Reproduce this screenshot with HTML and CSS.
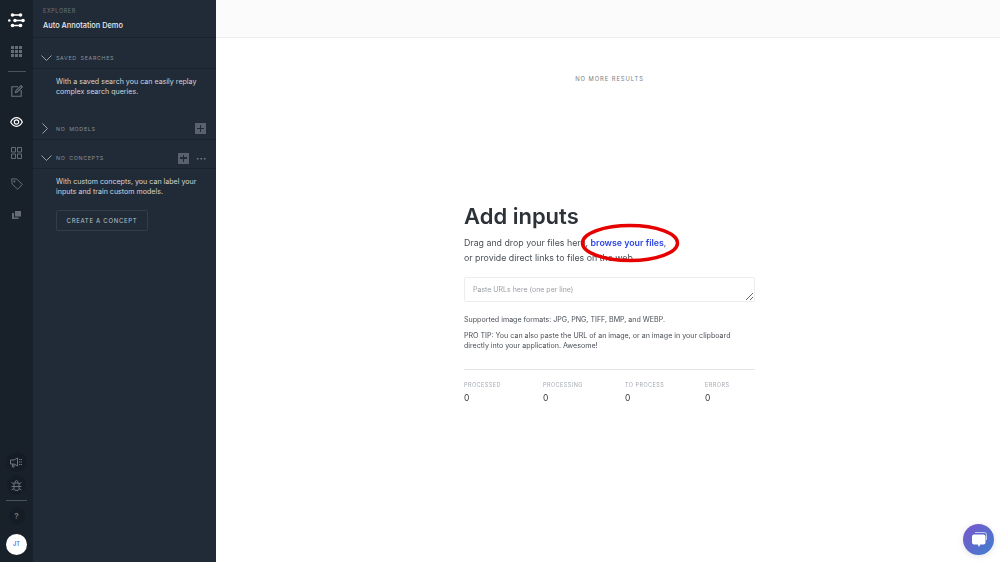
FILE: index.html
```html
<!DOCTYPE html>
<html lang="en">
<head>
    <meta charset="UTF-8">
    <meta name="viewport" content="width=device-width, initial-scale=1.0">
    <title>Explorer</title>
    <link rel="stylesheet" href="styles.css">
</head>
<body>

    <nav class="rail">
        <div class="rail-logo">
            <svg width="18" height="15" viewBox="0 0 18 15"><g fill="none" stroke="#fff" stroke-width="1.600"><path d="M4.500 2h8M7 7.500h8M4.500 12.500h8"/></g><g fill="#fff"><circle cx="4.500" cy="2" r="1.800"/><circle cx="12.500" cy="2" r="1.800"/><circle cx="1.300" cy="7.500" r="1.300"/><circle cx="7" cy="7.500" r="1.800"/><circle cx="15" cy="7.500" r="1.800"/><circle cx="4.500" cy="12.500" r="1.800"/><circle cx="12.500" cy="12.500" r="1.800"/></g></svg>
        </div>
        <div class="rail-item rail-apps">
            <svg width="11" height="11" viewBox="0 0 11 11" fill="#656c75"><path d="M0 0h3v3H0zM4 0h3v3H4zM8 0h3v3H8zM0 4h3v3H0zM4 4h3v3H4zM8 4h3v3H8zM0 8h3v3H0zM4 8h3v3H4zM8 8h3v3H8z"/></svg>
        </div>
        <div class="rail-line"></div>
        <div class="rail-item rail-edit">
            <svg width="12" height="12" viewBox="0 0 12 12" fill="none" stroke="#6b727b" stroke-width="1.100"><path d="M7 1.800H.8v9.400h9.400V5M4.500 7.500l.4-1.800L10 .6l1.300 1.300-5 5.100z"/></svg>
        </div>
        <div class="rail-item rail-eye">
            <svg width="13" height="10" viewBox="0 0 13 10" fill="none" stroke="#fff" stroke-width="1.200"><path d="M.7 5C2.200 2 4.200.7 6.500.7S10.800 2 12.300 5c-1.500 3-3.500 4.300-5.800 4.300S2.200 8 .7 5z"/><circle cx="6.500" cy="5" r="2.200"/></svg>
        </div>
        <div class="rail-item rail-grid">
            <svg width="11" height="12" viewBox="0 0 11 12" fill="none" stroke="#656c75"><path d="M.5.500h4v4.500h-4zM6.500.500h4v4.500h-4zM.5 7h4v4.500h-4zM6.500 7h4v4.500h-4z"/></svg>
        </div>
        <div class="rail-item rail-tag">
            <svg width="12" height="12" viewBox="0 0 12 12" fill="none" stroke="#656c75"><path d="M.7.800l5 .3 5.600 5.300-4.600 4.900L1.100 6z"/><circle cx="3.400" cy="3.500" r=".7"/></svg>
        </div>
        <div class="rail-item rail-copy">
            <svg width="9" height="8" viewBox="0 0 9 8" fill="#656c75"><path d="M3 0h6v5.500H3z"/><path d="M0 2h2v4.500h4.500V8H0z"/></svg>
        </div>
        <div class="rail-bottom">
            <div class="rail-item rail-round">
                <svg width="13" height="11" viewBox="0 0 13 11" fill="none" stroke="#6b727b"><path d="M.5 3h3.500l3.500-2v8L4 7H.5zM2.500 7v3h1.500V7"/><path d="M9 2.500h3M9 5h3M9 7.500h3" stroke-dasharray="1.500 .5"/></svg>
            </div>
            <div class="rail-item rail-round rail-bug">
                <svg width="11" height="12" viewBox="0 0 11 12" fill="none" stroke="#6b727b"><path d="M3 4h5v5.500a2 2 0 0 1-2 2H5a2 2 0 0 1-2-2zM4 4a1.500 2.500 0 0 1 3 0M3 7.500h5M3 5L.5 3.500M8 5l2.500-1.500M3 7.500H.5M8 7.500h2.500M3 9.500L.5 11M8 9.500l2.500 1.500"/></svg>
            </div>
            <div class="rail-line rail-line-low"></div>
            <div class="rail-help">?</div>
            <div class="avatar">JT</div>
        </div>
    </nav>

    <aside class="sidebar">
        <header class="sidebar-head">
            <div class="sidebar-kicker">EXPLORER</div>
            <div class="sidebar-title">Auto Annotation Demo</div>
        </header>

        <div class="section-head section-saved">
            <svg class="chev" width="11" height="6" viewBox="0 0 11 6"><path d="M.5.500l5 5 5-5" /></svg>
            <span class="section-label">SAVED SEARCHES</span>
        </div>
        <p class="section-text">With a saved search you can easily replay complex search queries.</p>

        <div class="section-head section-models">
            <svg class="chev" width="6" height="11" viewBox="0 0 6 11"><path d="M.5.500l5 5-5 5" /></svg>
            <span class="section-label">NO MODELS</span>
            <span class="add-box"></span>
        </div>

        <div class="section-head section-concepts">
            <svg class="chev" width="11" height="6" viewBox="0 0 11 6"><path d="M.5.500l5 5 5-5" /></svg>
            <span class="section-label">NO CONCEPTS</span>
            <span class="add-box"></span>
            <span class="dots">···</span>
        </div>
        <p class="section-text">With custom concepts, you can label your inputs and train custom models.</p>
        <button class="concept-button">CREATE A CONCEPT</button>
    </aside>

    <main class="main">
        <div class="topbar"></div>
        <div class="no-more">NO MORE RESULTS</div>

        <section class="inputs">
            <h1>Add inputs</h1>
            <p class="lead">Drag and drop your files here, <a href="#">browse your files</a>,<br>or provide direct links to files on the web.</p>
            <svg class="red-ring" width="100" height="40" viewBox="0 0 100 40"><ellipse cx="50" cy="20" rx="47.500" ry="17.500" /></svg>
            <textarea class="url-box" placeholder="Paste URLs here (one per line)"></textarea>
            <p class="note note-formats">Supported image formats: JPG, PNG, TIFF, BMP, and WEBP.</p>
            <p class="note">PRO TIP: You can also paste the URL of an image, or an image in your clipboard directly into your application. Awesome!</p>
            <div class="stats">
                <div class="stat"><div class="stat-label">PROCESSED</div><div class="stat-value">0</div></div>
                <div class="stat"><div class="stat-label">PROCESSING</div><div class="stat-value">0</div></div>
                <div class="stat"><div class="stat-label">TO PROCESS</div><div class="stat-value">0</div></div>
                <div class="stat"><div class="stat-label">ERRORS</div><div class="stat-value">0</div></div>
            </div>
        </section>
    </main>

    <div class="chat">
        <svg width="18" height="18" viewBox="0 0 18 18"><path fill="none" stroke="#fff" stroke-opacity=".65" d="M5 1.500h9.500a2 2 0 0 1 2 2V9"/><path fill="#fff" d="M4 3.500h9.500a2 2 0 0 1 2 2v6a2 2 0 0 1-2 2h-3.300L9 16l-1.200-2.500H4a2 2 0 0 1-2-2v-6a2 2 0 0 1 2-2z"/></svg>
    </div>

</body>
</html>
```

FILE: styles.css
```css
* {
    box-sizing: border-box;
}
body {
    font-family: Inter, "Liberation Sans", sans-serif;
    margin: 0;
    height: 562px;
    overflow: hidden;
    display: flex;
    background-color: #fff;
    color: #2d3239;
}

/* left icon rail */
.rail {
    width: 33px;
    flex: none;
    height: 562px;
    background-color: #18202a;
    display: flex;
    flex-direction: column;
    align-items: center;
}
.rail-logo {
    height: 15px;
    margin-top: 13px;
    display: flex;
}
.rail-item {
    height: 12px;
    display: flex;
    align-items: center;
    justify-content: center;
}
.rail-apps {
    margin-top: 17px;
}
.rail-line {
    width: 18px;
    height: 1px;
    background-color: #4a525b;
    margin-top: 14px;
}
.rail-edit {
    margin-top: 13px;
}
.rail-eye {
    margin-top: 19px;
}
.rail-grid {
    margin-top: 19px;
}
.rail-tag {
    margin-top: 19px;
}
.rail-copy {
    margin-top: 19px;
}
.rail-bottom {
    margin-top: auto;
    padding-bottom: 7px;
    display: flex;
    flex-direction: column;
    align-items: center;
}
.rail-round {
    border-radius: 50%;
    background-color: #151c25;
    box-shadow: 0 0 0 4px #151c25;
}
.rail-bug {
    margin-top: 11px;
}
.rail-line-low {
    width: 21px;
    margin-top: 9px;
}
.rail-help {
    width: 16px;
    height: 16px;
    margin-top: 7px;
    border-radius: 50%;
    background-color: #151c25;
    font-size: 8px;
    font-weight: 700;
    line-height: 16px;
    text-align: center;
    color: #6b727b;
}
.avatar {
    width: 21px;
    height: 21px;
    margin-top: 10px;
    border-radius: 50%;
    background-color: #fff;
    color: #3f6fe8;
    font-size: 5.500px;
    font-weight: 600;
    line-height: 21px;
    text-align: center;
}

/* explorer sidebar */
.sidebar {
    width: 183px;
    flex: none;
    height: 562px;
    background-color: #212b37;
    color: #d3d6da;
}
.sidebar-head {
    height: 38px;
    padding: 7px 0 0 10px;
    border-bottom: 1px solid #1a232d;
}
.sidebar-kicker {
    font-size: 5.500px;
    letter-spacing: .6px;
    line-height: 8px;
    color: #6b727b;
}
.sidebar-title {
    margin-top: 5px;
    font-size: 7.400px;
    font-weight: 500;
    line-height: 12px;
    color: #e8eaec;
}
.section-head {
    display: flex;
    align-items: center;
    padding: 8px 10px 0 8px;
    border-bottom: 1px solid #1a232d;
}
.section-saved {
    height: 31px;
    padding-top: 10px;
}
.section-models {
    margin-top: 13px;
    height: 30px;
}
.section-models .chev {
    margin: 0 8px 0 1px;
}
.section-concepts {
    height: 29px;
}
.chev {
    flex: none;
    margin-right: 4px;
    fill: none;
    stroke: #9aa0a7;
}
.section-label {
    flex: 1;
    font-size: 5.300px;
    letter-spacing: .7px;
    word-spacing: 1.500px;
    color: #8b9198;
}
.add-box {
    position: relative;
    width: 11px;
    height: 11px;
    background-color: #59626c;
}
.add-box::before {
    content: "";
    position: absolute;
    left: 2px;
    right: 2px;
    top: 4.750px;
    height: 1.500px;
    background-color: #212b37;
}
.add-box::after {
    content: "";
    position: absolute;
    top: 2px;
    bottom: 2px;
    left: 4.750px;
    width: 1.500px;
    background-color: #212b37;
}
.section-concepts .add-box {
    margin-right: 7px;
}
.dots {
    width: 10px;
    font-size: 10px;
    font-weight: 700;
    line-height: 8px;
    color: #7b838c;
    letter-spacing: .2px;
}
.section-text {
    margin: 8px 10px 0 23px;
    font-size: 7.100px;
    line-height: 10px;
}
.concept-button {
    display: block;
    margin: 13px 0 0 23px;
    width: 92px;
    height: 21px;
    padding: 0;
    border: 1px solid #333d48;
    border-radius: 2px;
    background-color: transparent;
    color: #bfc3c8;
    font-family: inherit;
    font-size: 6px;
    letter-spacing: .7px;
}

/* main area */
.main {
    flex: 1;
    min-width: 0;
}
.topbar {
    height: 38px;
    background-color: #fbfbfc;
    border-bottom: 1px solid #eceef0;
}
.no-more {
    margin-top: 37px;
    padding-left: 3px;
    text-align: center;
    font-size: 5.800px;
    letter-spacing: .95px;
    line-height: 8px;
    color: #777d84;
}
.inputs {
    position: relative;
    width: 291px;
    margin: 120px 0 0 248px;
}
.inputs h1 {
    margin: 0;
    font-size: 22px;
    font-weight: 600;
    line-height: 27px;
    color: #2d3239;
}
.lead {
    margin: 6px 0 0;
    font-size: 8.800px;
    line-height: 14.500px;
    color: #4a4f56;
}
.lead a {
    color: #2a45e6;
    font-weight: 600;
    text-decoration: none;
}
.red-ring {
    position: absolute;
    left: 116px;
    top: 20px;
    fill: none;
    stroke: #e60000;
    stroke-width: 3.500px;
}
.url-box {
    display: block;
    width: 291px;
    height: 25px;
    margin-top: 12px;
    padding: 7px 8px;
    border: 1px solid #eceded;
    border-radius: 2px;
    font-family: inherit;
    font-size: 7px;
    line-height: 10px;
    outline: none;
}
.url-box::placeholder {
    color: #9b9fa5;
}
.note {
    margin: 0 0 5px;
    font-size: 7.100px;
    line-height: 10.500px;
    color: #4a4f56;
}
.note-formats {
    margin-top: 13px;
}
.stats {
    display: flex;
    margin-top: 17px;
    padding-top: 11px;
    border-top: 1px solid #e4e5e7;
}
.stat {
    flex: none;
    width: 79px;
}
.stat:nth-child(2) {
    width: 82px;
}
.stat:nth-child(3) {
    width: 80px;
}
.stat:nth-child(4) {
    width: 50px;
}
.stat-label {
    font-size: 5.500px;
    letter-spacing: .45px;
    line-height: 8px;
    color: #a3a9b2;
}
.stat-value {
    margin-top: 3px;
    font-size: 8.500px;
    line-height: 12px;
    color: #33373d;
}

/* chat bubble */
.chat {
    position: absolute;
    left: 963px;
    top: 524px;
    width: 31px;
    height: 31px;
    border-radius: 50%;
    background: linear-gradient(135deg, #7a55cc, #3f7fcf);
    box-shadow: 0 1px 6px rgba(0, 0, 0, .12);
    display: flex;
    align-items: center;
    justify-content: center;
}
```
